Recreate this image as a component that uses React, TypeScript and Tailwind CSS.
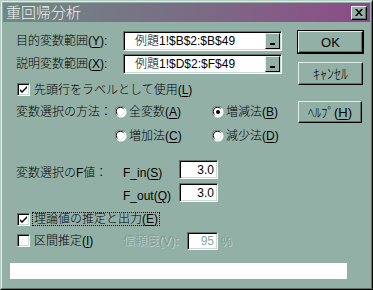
import React from 'react';

const font = { fontFamily: '"Liberation Sans", "Noto Sans CJK JP", sans-serif' };

const U = ({ children }: { children: React.ReactNode }) => (
  <span className="underline underline-offset-2">{children}</span>
);

const Sunken = ({
  className = '',
  children,
}: {
  className?: string;
  children?: React.ReactNode;
}) => (
  <div
    className={`border border-t-[#5e746d] border-l-[#5e746d] border-r-white border-b-white shadow-[inset_1px_1px_0_#000,inset_-1px_-1px_0_#c9d9d3] ${className}`}
  >
    {children}
  </div>
);

const Button = ({
  children,
  className = '',
  isDefault = false,
}: {
  children: React.ReactNode;
  className?: string;
  isDefault?: boolean;
}) => (
  <div className={isDefault ? `border border-black ${className}` : className}>
    <div className="flex h-full w-full items-center justify-center border border-t-[#e2ede9] border-l-[#e2ede9] border-r-black border-b-black bg-[#93b0a7] text-black shadow-[inset_-1px_-1px_0_#5e746d]">
      {children}
    </div>
  </div>
);

const Checkbox = ({ checked }: { checked?: boolean }) => (
  <Sunken className="flex h-[13px] w-[13px] shrink-0 items-center justify-center bg-white">
    {checked && (
      <svg width="9" height="9" viewBox="0 0 9 9">
        <path d="M1 4 L3 6 L8 1 L8 3 L3 8 L1 6 Z" fill="#000" />
      </svg>
    )}
  </Sunken>
);

const Radio = ({ checked }: { checked?: boolean }) => (
  <svg width="12" height="12" viewBox="0 0 12 12" className="shrink-0">
    <circle cx="6" cy="6" r="5.5" fill="#fff" />
    <path d="M1.5 9.5 A5.5 5.5 0 0 1 9.5 1.5" stroke="#5e746d" strokeWidth="1" fill="none" />
    <path d="M2.5 8.5 A4.2 4.2 0 0 1 8.5 2.5" stroke="#000" strokeWidth="1" fill="none" />
    <path d="M9.5 2.5 A5.5 5.5 0 0 1 2.5 9.5" stroke="#d9e6e1" strokeWidth="1" fill="none" />
    {checked && <circle cx="6" cy="6" r="2" fill="#000" />}
  </svg>
);

const RangeInput = ({ value }: { value: string }) => (
  <Sunken className="flex h-[20px] w-[159px] bg-white">
    <div className="flex flex-1 items-center pl-[11px] text-[12px] text-black">{value}</div>
    <div className="my-[1px] mr-[1px] flex w-[15px] items-end justify-center border border-t-[#e2ede9] border-l-[#e2ede9] border-r-black border-b-black bg-[#93b0a7] pb-[3px]">
      <div className="h-[2px] w-[5px] bg-black" />
    </div>
  </Sunken>
);

const NumInput = ({ value, disabled }: { value: string; disabled?: boolean }) => (
  <Sunken
    className={`flex items-center justify-end bg-white pr-[3px] text-[12px] ${
      disabled ? 'h-[18px] w-[31px] text-[#8fa59f]' : 'h-[19px] w-[39px] text-black'
    }`}
  >
    {value}
  </Sunken>
);

export default function App() {
  return (
    <div style={font} className="h-[290px] w-[373px] border border-t-[#b9cbc5] border-l-[#b9cbc5] border-r-black border-b-black bg-[#93b0a7] text-[12px] font-light leading-none text-black">
      <div className="flex h-full flex-col border border-t-[#e0ece8] border-l-[#e0ece8] border-r-[#5e746d] border-b-[#5e746d]">
        <div className="mx-[1px] mt-[1px] flex h-[19px] items-center justify-between bg-linear-to-r from-[#6e8984] via-[#7a6c84] to-[#8c4a88] pl-[3px] pr-[3px]">
          <span className="text-[15px] text-[#eef2f0]">重回帰分析</span>
          <Button className="h-[14px] w-[16px]">
            <svg width="8" height="7" viewBox="0 0 8 7">
              <path d="M0 0 H2 L4 2.5 L6 0 H8 L5 3.5 L8 7 H6 L4 4.5 L2 7 H0 L3 3.5 Z" fill="#000" />
            </svg>
          </Button>
        </div>

        <div className="flex">
          <div className="flex flex-col pl-[14px]">
            <div className="mt-[9px] flex items-center">
              <span className="w-[107px]">
                目的変数範囲(<U>Y</U>):
              </span>
              <RangeInput value="例題1!$B$2:$B$49" />
            </div>
            <div className="mt-[3px] flex items-center">
              <span className="w-[107px]">
                説明変数範囲(<U>X</U>):
              </span>
              <RangeInput value="例題1!$D$2:$F$49" />
            </div>

            <div className="mt-[9px] flex h-[13px] items-center gap-[4px] pl-[1px]">
              <Checkbox checked />
              <span>
                先頭行をラベルとして使用(<U>L</U>)
              </span>
            </div>

            <div className="mt-[8px] flex h-[16px] items-center">
              <span className="w-[99px]">変数選択の方法：</span>
              <div className="flex w-[97px] items-center gap-[2px]">
                <Radio />
                <span>
                  全変数(<U>A</U>)
                </span>
              </div>
              <div className="flex items-center gap-[2px]">
                <Radio checked />
                <span>
                  増減法(<U>B</U>)
                </span>
              </div>
            </div>
            <div className="mt-[8px] flex h-[16px] items-center pl-[99px]">
              <div className="flex w-[97px] items-center gap-[2px]">
                <Radio />
                <span>
                  増加法(<U>C</U>)
                </span>
              </div>
              <div className="flex items-center gap-[2px]">
                <Radio />
                <span>
                  減少法(<U>D</U>)
                </span>
              </div>
            </div>

            <div className="mt-[16px] flex items-center">
              <span className="mt-[6px] w-[107px]">変数選択のF値：</span>
              <span className="mt-[6px] w-[56px]">
                F_in(<U>S</U>)
              </span>
              <NumInput value="3.0" />
            </div>
            <div className="mt-[4px] flex items-center pl-[107px]">
              <span className="mt-[6px] w-[56px]">
                F_out(<U>Q</U>)
              </span>
              <NumInput value="3.0" />
            </div>

            <div className="mt-[10px] flex h-[14px] items-center gap-[2px] pl-[1px]">
              <Checkbox checked />
              <span className="flex h-[14px] items-center border border-dotted border-black px-[1px]">
                理論値の推定と出力(<U>E</U>)
              </span>
            </div>

            <div className="mt-[5px] flex h-[19px] items-center pl-[1px]">
              <div className="flex w-[106px] items-center gap-[4px]">
                <Checkbox />
                <span>
                  区間推定(<U>I</U>)
                </span>
              </div>
              <span className="w-[64px] text-[#7d948d] [text-shadow:1px_1px_0_#c6d7d1]">信頼度(V):</span>
              <NumInput value="95" disabled />
              <span className="ml-[3px] mt-[3px] text-[#7d948d] [text-shadow:1px_1px_0_#c6d7d1]">%</span>
            </div>
          </div>

          <div className="ml-[15px] flex flex-col">
            <Button isDefault className="mt-[8px] h-[24px] w-[67px] text-[13px] font-normal">
              OK
            </Button>
            <Button className="ml-[1px] mt-[8px] h-[23px] w-[65px] text-[14px]">ｷｬﾝｾﾙ</Button>
            <Button className="ml-[1px] mt-[16px] h-[22px] w-[64px] text-[13px]">
              ﾍﾙﾌﾟ(<U>H</U>)
            </Button>
          </div>
        </div>

        <div className="ml-[8px] mt-[13px] h-[16px] w-[337px] bg-white" />
      </div>
    </div>
  );
}
